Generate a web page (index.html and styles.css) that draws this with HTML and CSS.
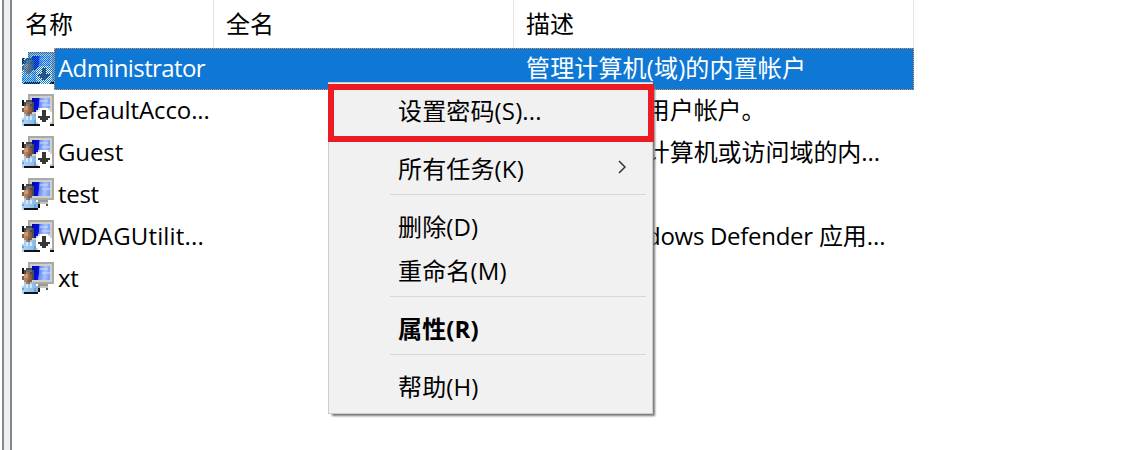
FILE: index.html
```html
<!DOCTYPE html>
<html lang="zh-CN">
<head>
<meta charset="utf-8">
<title>用户</title>
<link rel="stylesheet" href="styles.css">
</head>
<body>
<svg class="defs" width="0" height="0">
  <defs>
    <linearGradient id="screen" x1="0" x2="1" y1="0" y2="0.08">
      <stop offset="0" stop-color="#0008a8"/><stop offset="0.4" stop-color="#0812df"/><stop offset="0.43" stop-color="#6585f4"/><stop offset="0.75" stop-color="#a9c2ff"/><stop offset="1" stop-color="#7d9ef8"/>
    </linearGradient>
    <linearGradient id="face" x1="0" x2="1"><stop offset="0" stop-color="#c08f68"/><stop offset="1" stop-color="#815438"/></linearGradient>
    <linearGradient id="shirt" x1="0" x2="1"><stop offset="0" stop-color="#afd5f6"/><stop offset="1" stop-color="#83b4e2"/></linearGradient>
    <pattern id="dither" width="2" height="2" patternUnits="userSpaceOnUse">
      <path fill="#0f78d4" d="M0 0h1v1H0zM1 1h1v1H1z"/>
    </pattern>
    <symbol id="user" viewBox="0 0 32 32">
      <path fill="#aaa9a4" d="M6 0h26v22H6z"/>
      <path fill="#d1d0c8" d="M8 2h22v18H8z"/>
      <path fill="url(#screen)" d="M10 4h18v14H10z"/>
      <path fill="#c7d7ff" opacity=".6" d="M18 6h8v2h-8zM20 10h8v2h-8z"/>
      <path fill="#999" d="M16 22h10v2h-6v2h-4z"/><path fill="#c4c4c0" d="M18 24h8v2h-8z"/><path fill="#555" d="M24 26h2v2h-2z"/>
      <path fill="#101418" d="M0 6h2v6H0zM0 28h2v4H0zM2 30h14v2H2zM16 26h2v4h-2z"/>
      <path fill="#4a4d50" d="M2 8h2V6h6v2h2v10h-2v2H8v-8H2z"/>
      <path fill="#6d7073" d="M4 8h6v2H4z"/>
      <path fill="url(#face)" d="M2 12h2v-2h4v2h2v6H8v4H4v-2H2z"/>
      <path fill="#c99b75" d="M2 12h4v4H2z"/>
      <path fill="#7b5b48" d="M0 14h2v4H0zM6 18h4v2H6z"/>
      <path fill="url(#shirt)" d="M2 20h2v2h4v-2h4v2h2v2h2v6H2v2H0v-8h2z"/>
      <path fill="#d0e8fc" d="M4 22h2v4H4zM8 22h2v4H8z"/>
      <path fill="#6e9fce" d="M12 26h2v4h-2zM0 26h2v2H0z"/>
    </symbol>
    <symbol id="disabled" viewBox="0 0 32 32">
      <use href="#user" width="32" height="32"/>
      <path fill="#aaa9a4" d="M28 16h4v14h-4z"/>
      <path fill="#111" d="M12 30h6v2h-6zM28 30h4v2h-4z"/>
      <path fill="#fff" d="M18 14h8v2h2v2h2v10h-2v2h-2v2h-8v-2h-2v-2h-2V18h2v-2h2z"/>
      <path fill="#d0d4d7" d="M16 14h2v2h-2zM26 14h2v2h-2zM14 16h2v2h-2zM28 16h2v2h-2zM14 28h2v2h-2zM28 28h2v2h-2z"/>
      <path fill="#373737" d="M20 16h4v6h4v2h-2v2h-2v2h-4v-2h-2v-2h-2v-2h4z"/>
    </symbol>
  </defs>
</svg>
<main class="window">
  <div class="splitter"></div>
  <section class="list">
    <header class="head"><div class="name">名称</div><div>全名</div><div>描述</div></header>
    <div class="row selected">
      <svg class="icon" shape-rendering="crispEdges"><use href="#disabled" width="32" height="32"/><path fill="url(#dither)" d="M6 0h26v30h-2v2H0V6h6z"/></svg>
      <div class="cells"><span class="account admin">Administrator</span><span class="desc">管理计算机(域)的内置帐户</span></div>
    </div>
    <div class="row">
      <svg class="icon" shape-rendering="crispEdges"><use href="#disabled" width="32" height="32"/></svg>
      <div class="cells"><span class="account default">DefaultAcco...</span><span class="desc">系统管理的用户帐户。</span></div>
    </div>
    <div class="row">
      <svg class="icon" shape-rendering="crispEdges"><use href="#disabled" width="32" height="32"/></svg>
      <div class="cells"><span class="account guest">Guest</span><span class="desc">供来宾访问计算机或访问域的内...</span></div>
    </div>
    <div class="row">
      <svg class="icon" shape-rendering="crispEdges"><use href="#user" width="32" height="32"/></svg>
      <div class="cells"><span class="account">test</span></div>
    </div>
    <div class="row">
      <svg class="icon" shape-rendering="crispEdges"><use href="#disabled" width="32" height="32"/></svg>
      <div class="cells"><span class="account wdag">WDAGUtilit...</span><span class="desc">系统为 <span class="product">Windows Defender</span> 应用...</span></div>
    </div>
    <div class="row">
      <svg class="icon" shape-rendering="crispEdges"><use href="#user" width="32" height="32"/></svg>
      <div class="cells"><span class="account">xt</span></div>
    </div>
  </section>
  <nav class="menu">
    <div class="item">设置密码(S)...</div>
    <hr>
    <div class="item">所有任务(K)<svg class="arrow" viewBox="0 0 8 14"><path d="M1 1l6 6-6 6"/></svg></div>
    <hr>
    <div class="item">删除(D)</div>
    <div class="item">重命名(M)</div>
    <hr>
    <div class="item bold">属性(R)</div>
    <hr>
    <div class="item">帮助(H)</div>
  </nav>
  <div class="highlight"></div>
</main>
</body>
</html>
```
FILE: styles.css
```css
* { box-sizing: border-box; }
body { margin: 0; background: #fff; color: #000; font: 24px/40px "Open Sans", "Noto Sans CJK SC", sans-serif; overflow: hidden; }
.defs { position: absolute; }
.window { position: relative; display: flex; width: 1126px; height: 450px; overflow: hidden; }
.splitter { width: 10px; margin-left: 2px; border: solid #838790; border-width: 0 2px; background: #f0f0f0; }
.list { width: 902px; }
.head { display: grid; grid-template-columns: 202px 300px 400px; height: 48px; line-height: 48px; }
.head div { padding-left: 12px; border-right: 1px solid #e5e5e5; }
.head .name { padding-left: 13px; }
.row { display: flex; height: 42px; padding-left: 10px; }
.icon { width: 32px; height: 32px; margin-top: 4px; flex: none; }
.cells { display: grid; grid-template-columns: 472px 1fr; width: 860px; white-space: nowrap; }
.account { padding-left: 4px; letter-spacing: -0.3px; }
.admin { letter-spacing: -0.6px; }
.default { letter-spacing: -0.1px; }
.guest { letter-spacing: -0.1px; }
.wdag { letter-spacing: 0.15px; }
.desc { letter-spacing: -0.05px; }
.product { letter-spacing: -0.3px; }
.selected .cells { color: #fff; background: #0f78d4; border: 1px dotted #e98b4a; line-height: 38px; }
.selected .account { padding-left: 3px; }
.selected .desc { margin-left: -1px; letter-spacing: 0.15px; }
.menu { position: absolute; left: 328px; top: 82px; width: 325px; height: 332px; padding: 2px 6px 0 61px; background: #f1f1f1; border: 1px solid #ccc; box-shadow: 3px 3px 2px -1px #777; }
.item { display: flex; align-items: center; justify-content: space-between; height: 44px; padding: 7px 20px 0 8px; letter-spacing: 0.15px; }
.menu hr { height: 1px; margin: 7px 0 6px; border: 0; background: #d7d7d7; }
.bold { font-weight: 700; }
.arrow { width: 8px; height: 14px; margin-top: -4px; fill: none; stroke: #333; stroke-width: 1.5; }
.highlight { position: absolute; left: 328px; top: 84px; width: 326px; height: 58px; border: 6px solid #ed1c24; }
```
